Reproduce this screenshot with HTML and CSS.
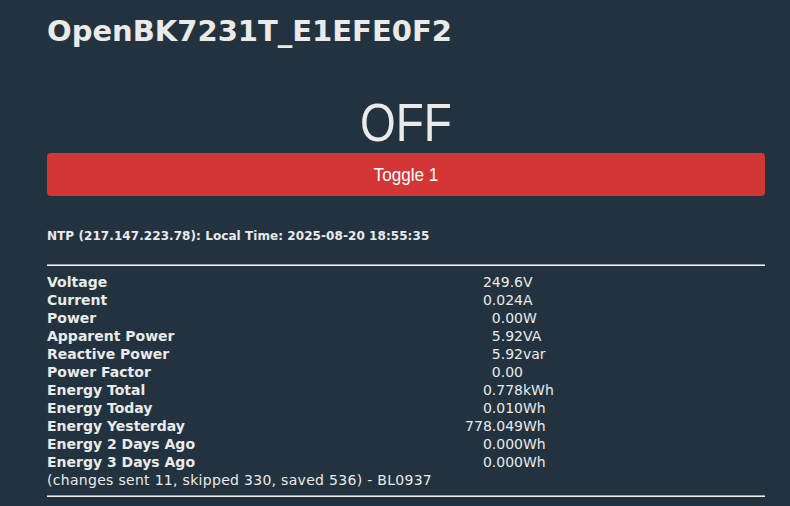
FILE: index.html
```html
<!DOCTYPE html>
<html lang="en">
<head>
  <meta charset="UTF-8" />
  <title>OpenBK7231T_E1EFE0F2</title>
  <link rel="stylesheet" href="styles.css">
</head>
<body>
  <div class="page">
    <h1>OpenBK7231T_E1EFE0F2</h1>

    <!-- relay state + toggle -->
    <div class="state"><span>OFF</span></div>
    <button class="toggle"><span>Toggle 1</span></button>

    <div class="ntp">NTP (217.147.223.78): Local Time: 2025-08-20 18:55:35</div>
    <hr>

    <!-- BL0937 readings -->
    <div class="readings">
      <div class="label">Voltage</div><div class="num">249.6</div><div class="unit">V</div>
      <div class="label">Current</div><div class="num">0.024</div><div class="unit">A</div>
      <div class="label">Power</div><div class="num">0.00</div><div class="unit">W</div>
      <div class="label">Apparent Power</div><div class="num">5.92</div><div class="unit">VA</div>
      <div class="label">Reactive Power</div><div class="num">5.92</div><div class="unit">var</div>
      <div class="label">Power Factor</div><div class="num">0.00</div><div class="unit"></div>
      <div class="label">Energy Total</div><div class="num">0.778</div><div class="unit">kWh</div>
      <div class="label">Energy Today</div><div class="num">0.010</div><div class="unit">Wh</div>
      <div class="label">Energy Yesterday</div><div class="num">778.049</div><div class="unit">Wh</div>
      <div class="label">Energy 2 Days Ago</div><div class="num">0.000</div><div class="unit">Wh</div>
      <div class="label">Energy 3 Days Ago</div><div class="num">0.000</div><div class="unit">Wh</div>
      <div class="note">(changes sent 11, skipped 330, saved 536) - BL0937</div>
    </div>
    <hr>
  </div>
</body>
</html>
```

FILE: styles.css
```css
body {
  background-color: #22333f;
  color: #eaeaea;
  font-family: 'DejaVu Sans', Verdana, sans-serif;
  font-size: 14px;
  margin: 0;
  padding: 0;
}

.page {
  width: 718px;
  margin-left: 47px;
  padding-top: 12px;
}

h1 {
  font-size: 29px;
  font-weight: bold;
  margin: 0;
  line-height: 38px;
}

/* narrow look: no condensed face installed, so squeeze the text */
.state {
  font-family: 'Liberation Sans', Arial, sans-serif;
  font-size: 54px;
  text-align: center;
  line-height: 60px;
  margin-top: 42px;
}

.state span {
  display: inline-block;
  transform: scaleX(0.85);
}

.toggle {
  display: block;
  width: 100%;
  height: 43px;
  margin-top: 1px;
  border: none;
  border-radius: 4px;
  background-color: #d43535;
  color: #fff;
  font-family: 'Liberation Sans', Arial, sans-serif;
  font-size: 19px;
  cursor: pointer;
}

.toggle span {
  display: inline-block;
  transform: scaleX(0.9);
}

.ntp {
  font-size: 12px;
  font-weight: bold;
  letter-spacing: 0.07px;
  margin-top: 33px;
  line-height: 15px;
}

hr {
  border: none;
  border-top: 1px solid #9aa0a4;
  border-bottom: 1px solid #eeeeee;
  margin: 20px 0 0 0;
}

.readings {
  display: grid;
  grid-template-columns: 410px 66px 1fr;
  line-height: 18px;
  margin-top: 7px;
  margin-bottom: 6px;
}

.readings .label {
  font-weight: bold;
}

.readings .num {
  text-align: right;
}

.readings .note {
  grid-column: 1 / 4;
  letter-spacing: 0.3px;
}

.readings + hr {
  margin-top: 0;
}
```
